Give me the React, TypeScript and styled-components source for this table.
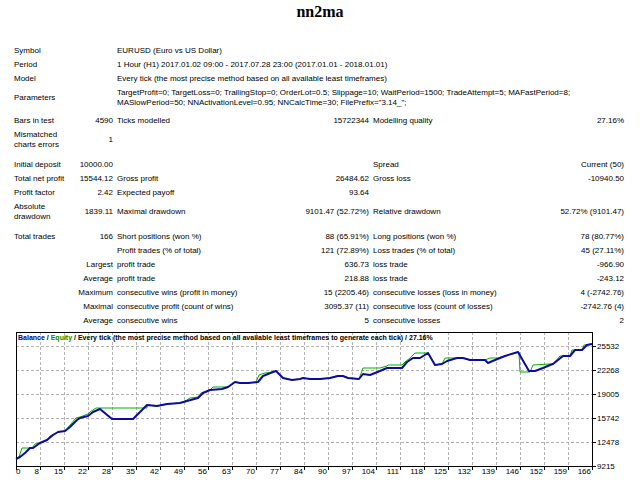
import React from 'react';
import styled, { createGlobalStyle } from "styled-components";

const GlobalStyle = createGlobalStyle`
  html, body {
    margin: 0;
    padding: 0;
    background: #fff;
  }
  body {
    font-family: "Liberation Sans", Arial, sans-serif;
    font-size: 8px;
    color: #000;
  }
`

type Point = [number, number];

const balance: Point[] = [
    [16, 459], [20, 457], [25, 453], [30, 448], [33, 448], [40, 443], [47, 440], [53, 435], [58, 432], [65, 431],
    [70, 427], [77, 420], [80, 418], [88, 416], [93, 412], [100, 409], [112, 419], [133, 419], [147, 405], [157, 406],
    [167, 404], [180, 403], [187, 401], [198, 398], [203, 393], [210, 390], [222, 389], [228, 387], [235, 382], [240, 383],
    [248, 383], [258, 382], [263, 376], [273, 372], [276, 371], [283, 378], [292, 380], [300, 379], [303, 378], [310, 379],
    [320, 379], [330, 378], [338, 376], [343, 376], [348, 378], [359, 379], [363, 374], [370, 375], [380, 371], [387, 368],
    [402, 368], [407, 362], [413, 358], [420, 358], [428, 353], [435, 365], [442, 364], [447, 361], [457, 358], [463, 358],
    [470, 360], [485, 360], [488, 363], [495, 360], [505, 356], [518, 352], [529, 371], [535, 371], [543, 368], [550, 365],
    [553, 364], [563, 356], [570, 356], [575, 350], [582, 350], [587, 345], [592, 344],
];

const equity: Point[] = [
    [16, 459], [19, 457], [22, 448], [32, 448], [35, 444], [40, 443], [47, 440], [50, 436], [58, 432], [65, 431],
    [70, 425], [76, 418], [80, 417], [88, 414], [90, 412], [96, 408], [147, 408], [147, 405], [157, 406], [167, 404],
    [180, 403], [187, 400], [190, 398], [198, 397], [201, 393], [210, 390], [213, 387], [228, 387], [235, 382], [240, 383],
    [248, 383], [256, 382], [259, 375], [265, 373], [273, 372], [276, 371], [283, 378], [292, 380], [300, 379], [303, 378],
    [310, 379], [320, 379], [330, 378], [336, 376], [343, 376], [348, 378], [359, 379], [363, 368], [380, 368], [387, 366],
    [388, 365], [402, 365], [405, 362], [410, 358], [415, 353], [428, 353], [435, 365], [442, 364], [445, 358], [457, 358],
    [463, 358], [470, 360], [485, 360], [490, 358], [498, 358], [505, 356], [518, 352], [519, 352], [520, 372], [530, 372],
    [533, 365], [550, 364], [553, 364], [560, 356], [570, 356], [572, 350], [582, 350], [584, 345], [592, 344],
];

const xLabels = ["0", "8", "15", "22", "28", "35", "42", "49", "56", "63", "70", "77", "84", "90", "97",
    "104", "111", "118", "125", "132", "139", "146", "152", "159", "166"];
const yLabels = ["25532", "22268", "19005", "15742", "12478", "9215"];

const LEFT = 16, RIGHT = 592, TOP = 332, BOTTOM = 466;

const pts = (p: Point[]) => p.map(([x, y]) => `${x},${y}`).join(" ");

function Chart() {
    return (
        <ChartSvg viewBox={`0 ${TOP} 640 148`} width={640} height={148}>
            {xLabels.slice(1, 24).map((_, i) => {
                const x = LEFT + 24 * (i + 1) + 0.5;
                return <GridLine key={"v" + i} x1={x} y1={TOP} x2={x} y2={BOTTOM}/>
            })}
            {yLabels.slice(0, 5).map((_, i) => {
                const y = 346 + 24 * i + 0.5;
                return <GridLine key={"h" + i} x1={LEFT} y1={y} x2={RIGHT} y2={y}/>
            })}
            <Frame x={LEFT + 0.5} y={TOP + 0.5} width={RIGHT - LEFT} height={BOTTOM - TOP}/>

            <polyline points={pts(equity)} fill="none" stroke="#00b000" strokeWidth={1}/>
            <polyline points={pts(balance)} fill="none" stroke="#0c0c9c" strokeWidth={2} strokeLinejoin="round"/>

            <Legend x={18} y={340}>
                <tspan fill="#00008b">Balance</tspan>
                <tspan> / </tspan>
                <tspan fill="#009000">Equity</tspan>
                <tspan> / Every tick (the most precise method based on all available least timeframes to generate each tick) / 27.16%</tspan>
            </Legend>

            {yLabels.map((label, i) => {
                const y = 346 + 24 * i;
                return (
                    <g key={label}>
                        <Tick x1={RIGHT + 1} y1={y + 0.5} x2={RIGHT + 4} y2={y + 0.5}/>
                        <AxisText x={597} y={y + 3}>{label}</AxisText>
                    </g>
                )
            })}

            {xLabels.map((label, i) => {
                const x = LEFT + 24 * i;
                return (
                    <g key={label}>
                        <Tick x1={x + 0.5} y1={BOTTOM} x2={x + 0.5} y2={BOTTOM + 4}/>
                        <AxisText x={i === 0 ? x : x - 1} y={474} textAnchor={i === 0 ? "start" : "end"}>{label}</AxisText>
                    </g>
                )
            })}
        </ChartSvg>
    )
}

function Row({label, value, rest}: { label: React.ReactNode; value?: string; rest?: (string | undefined)[] }) {
    const r = rest ?? [];
    return (
        <tr>
            <Cell>{label}</Cell>
            <Cell $right>{value}</Cell>
            <Cell>{r[0]}</Cell>
            <Cell $right>{r[1]}</Cell>
            <Cell>{r[2]}</Cell>
            <Cell $right>{r[3]}</Cell>
        </tr>
    )
}

function StatRow({title, items}: { title: string; items: string[] }) {
    return (
        <tr>
            <Cell colSpan={2} $right>{title}</Cell>
            <Cell>{items[0]}</Cell>
            <Cell $right>{items[1]}</Cell>
            <Cell>{items[2]}</Cell>
            <Cell $right>{items[3]}</Cell>
        </tr>
    )
}

function InfoRow({label, children}: { label: string; children: React.ReactNode }) {
    return (
        <tr>
            <Cell colSpan={2}>{label}</Cell>
            <Cell colSpan={4}>{children}</Cell>
        </tr>
    )
}

export default function App() {
    return (
        <Page>
            <GlobalStyle/>
            <Title>nn2ma</Title>

            <Report>
                <colgroup>
                    <Col $w={64}/>
                    <Col $w={39}/>
                    <Col $w={185}/>
                    <Col $w={71}/>
                    <Col $w={170}/>
                    <Col $w={85}/>
                </colgroup>
                <tbody>
                <InfoRow label="Symbol">EURUSD (Euro vs US Dollar)</InfoRow>
                <InfoRow label="Period">1 Hour (H1) 2017.01.02 09:00 - 2017.07.28 23:00 (2017.01.01 - 2018.01.01)</InfoRow>
                <InfoRow label="Model">Every tick (the most precise method based on all available least timeframes)</InfoRow>
                <InfoRow label="Parameters">
                    TargetProfit=0; TargetLoss=0; TrailingStop=0; OrderLot=0.5; Slippage=10; WaitPeriod=1500; TradeAttempt=5; MAFastPeriod=8;<br/>
                    MASlowPeriod=50; NNActivationLevel=0.95; NNCalcTime=30; FilePrefix="3.14_";
                </InfoRow>
                <Spacer $h={4}><td colSpan={6}/></Spacer>
                <Row label="Bars in test" value="4590" rest={["Ticks modelled", "15722344", "Modelling quality", "27.16%"]}/>
                <Row label="Mismatched charts errors" value="1"/>
                <Spacer $h={6}><td colSpan={6}/></Spacer>
                <Row label="Initial deposit" value="10000.00" rest={[undefined, undefined, "Spread", "Current (50)"]}/>
                <Row label="Total net profit" value="15544.12" rest={["Gross profit", "26484.62", "Gross loss", "-10940.50"]}/>
                <Row label="Profit factor" value="2.42" rest={["Expected payoff", "93.64"]}/>
                <Row label="Absolute drawdown" value="1839.11" rest={["Maximal drawdown", "9101.47 (52.72%)", "Relative drawdown", "52.72% (9101.47)"]}/>
                <Spacer $h={6}><td colSpan={6}/></Spacer>
                <Row label="Total trades" value="166" rest={["Short positions (won %)", "88 (65.91%)", "Long positions (won %)", "78 (80.77%)"]}/>
                <Row label="" rest={["Profit trades (% of total)", "121 (72.89%)", "Loss trades (% of total)", "45 (27.11%)"]}/>
                <StatRow title="Largest" items={["profit trade", "636.73", "loss trade", "-966.90"]}/>
                <StatRow title="Average" items={["profit trade", "218.88", "loss trade", "-243.12"]}/>
                <StatRow title="Maximum" items={["consecutive wins (profit in money)", "15 (2205.46)", "consecutive losses (loss in money)", "4 (-2742.76)"]}/>
                <StatRow title="Maximal" items={["consecutive profit (count of wins)", "3095.37 (11)", "consecutive loss (count of losses)", "-2742.76 (4)"]}/>
                <StatRow title="Average" items={["consecutive wins", "5", "consecutive losses", "2"]}/>
                </tbody>
            </Report>

            <Chart/>
        </Page>
    )
}

const Page = styled.div`
    width: 640px;
    height: 480px;
    overflow: hidden;
`
const Title = styled.h1`
    font-family: "Liberation Serif", "Times New Roman", serif;
    font-weight: bold;
    font-size: 16px;
    line-height: 18px;
    text-align: center;
    margin: 0;
    padding-top: 3px;
    height: 18px;
`
const Report = styled.table`
    margin: 23px 0 0 12px;
    width: 614px;
    table-layout: fixed;
    border-collapse: collapse;
    border-spacing: 0;
`
const Col = styled.col<{ $w: number }>`
    width: ${p => p.$w}px;
`
const Cell = styled.td<{ $right?: boolean }>`
    padding: 2px;
    line-height: 10px;
    vertical-align: middle;
    text-align: ${p => p.$right ? 'right' : 'left'};
    white-space: normal;
`
const Spacer = styled.tr<{ $h: number }>`
    height: ${p => p.$h}px;
    td {
        padding: 0;
    }
`
const ChartSvg = styled.svg`
    display: block;
    margin-top: 4px;
    font-family: "Liberation Sans", Arial, sans-serif;
`
const GridLine = styled.line`
    stroke: #b4b4b4;
    stroke-width: 1;
    stroke-dasharray: 3 2;
`
const Frame = styled.rect`
    fill: none;
    stroke: #000;
    stroke-width: 1;
`
const Tick = styled.line`
    stroke: #000;
    stroke-width: 1;
`
const Legend = styled.text`
    font-size: 7px;
    font-weight: 600;
    fill: #000;
`
const AxisText = styled.text`
    font-size: 8px;
    fill: #000;
`
